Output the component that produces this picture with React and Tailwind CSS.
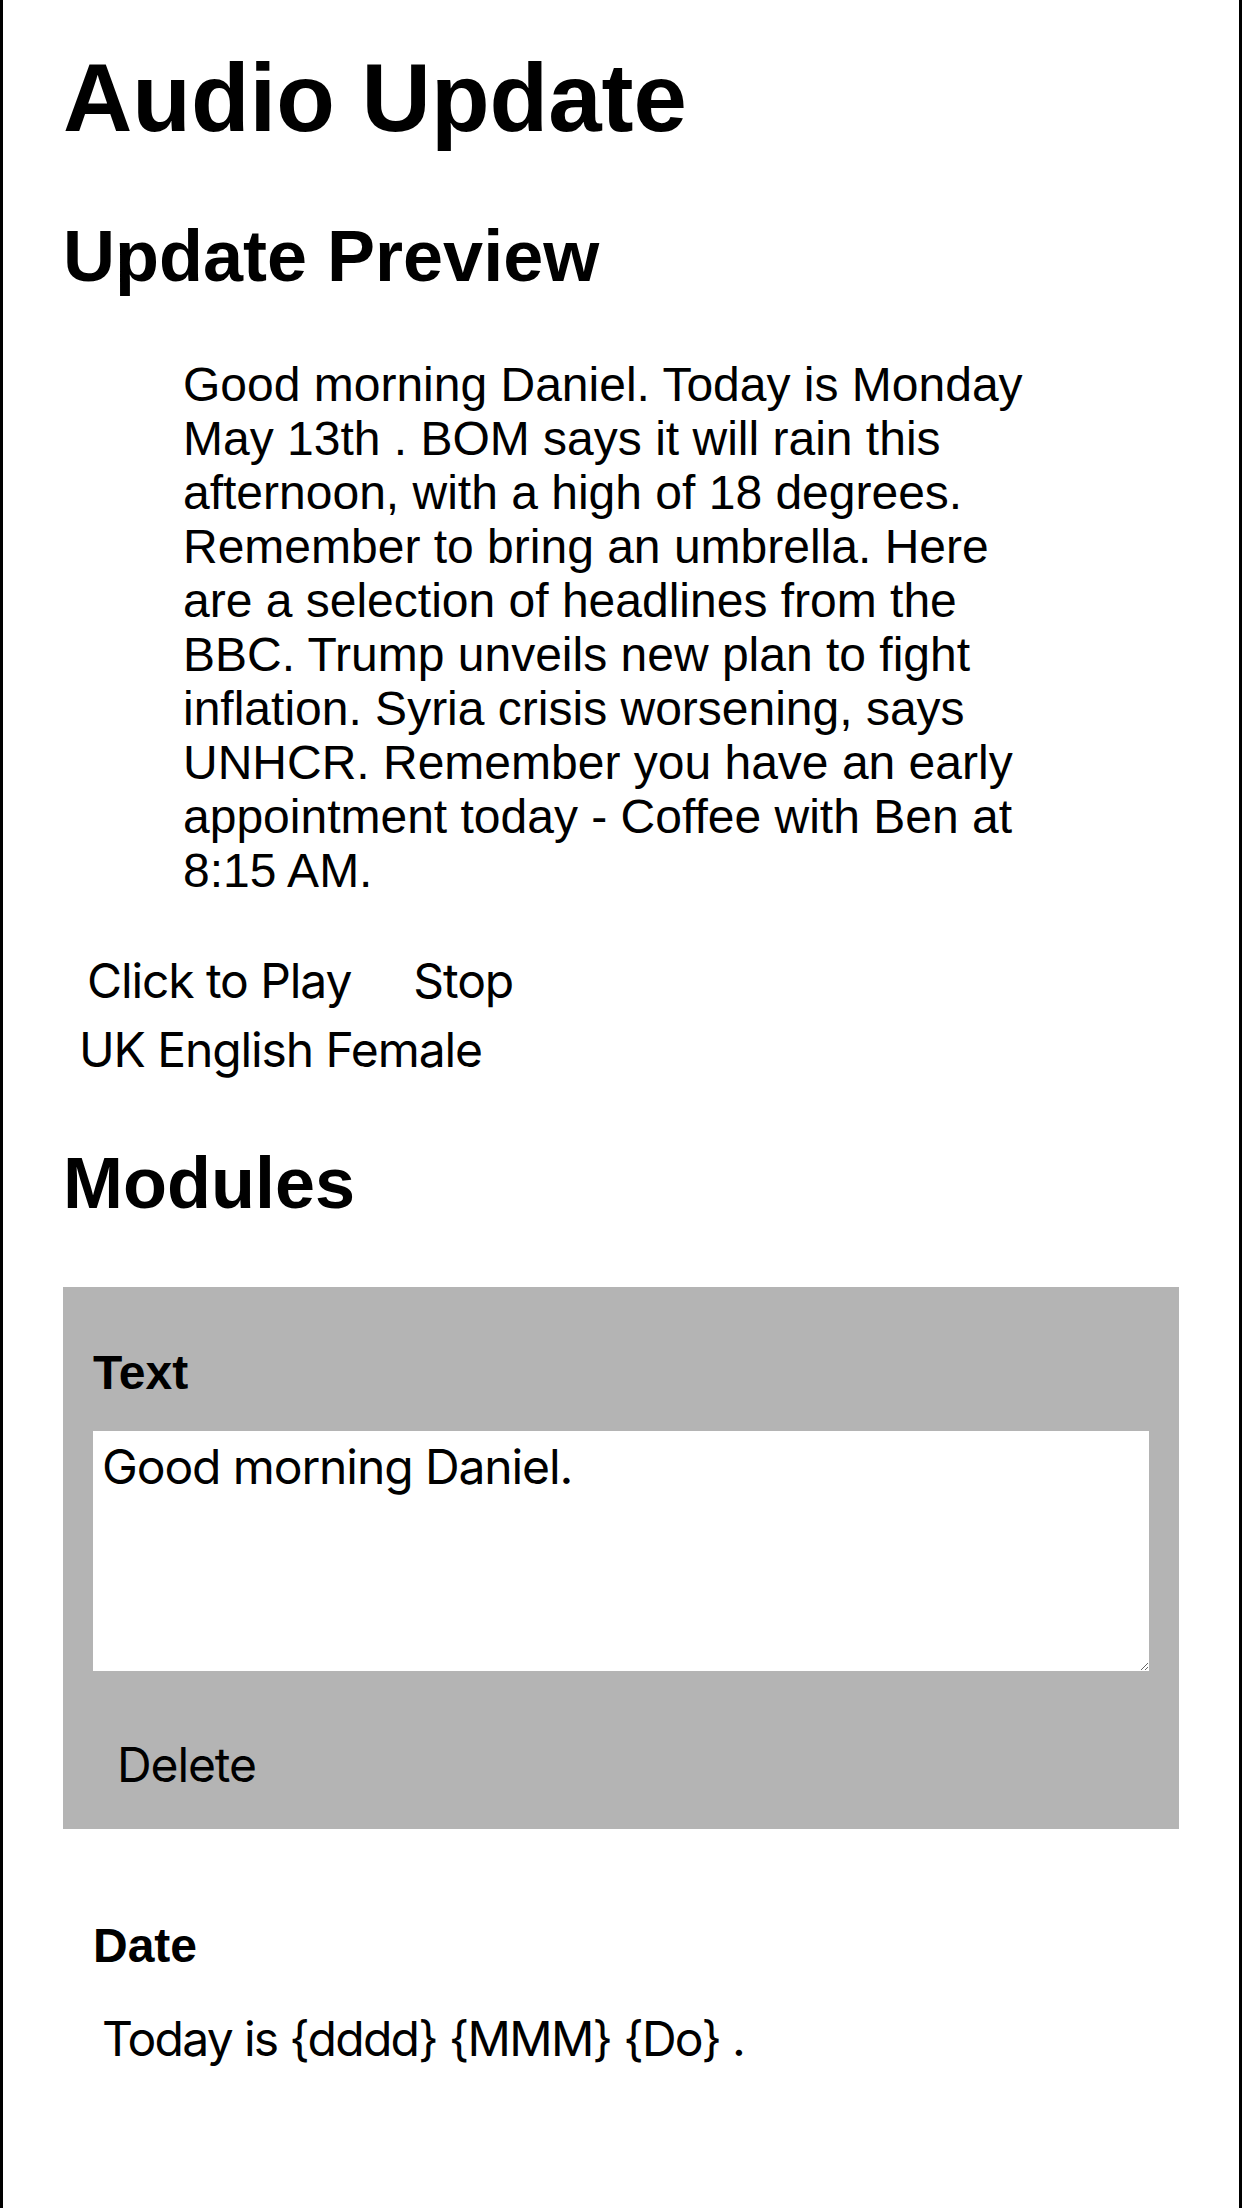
const PREVIEW_TEXT =
  "Good morning Daniel. Today is Monday May 13th . BOM says it will rain this afternoon, with a high of 18 degrees. Remember to bring an umbrella. Here are a selection of headlines from the BBC. Trump unveils new plan to fight inflation. Syria crisis worsening, says UNHCR. Remember you have an early appointment today - Coffee with Ben at 8:15 AM.";

const heading = "font-['Liberation_Sans',Arial,sans-serif] font-bold text-black";
const ui = "font-['Inter','Noto_Sans',sans-serif] tracking-[-1.1px] text-black";

function TextModule() {
  return (
    <div className="mt-[62px] bg-[#b4b4b4] px-[30px] pt-[58px] pb-[35px]">
      <h4 className={`${heading} text-[48px] leading-[55px]`}>Text</h4>
      <textarea
        defaultValue="Good morning Daniel."
        className={`${ui} mt-[31px] block h-[240px] w-full bg-white px-[9px] pt-[7px] text-[48px] leading-[58px] outline-none`}
      />
      <button className={`${ui} mt-[65px] ml-[24px] block text-[48px] leading-[58px]`}>
        Delete
      </button>
    </div>
  );
}

function DateModule() {
  return (
    <div className="mt-[31px] px-[30px] pt-[58px]">
      <h4 className={`${heading} text-[48px] leading-[55px]`}>Date</h4>
      <input
        defaultValue="Today is {dddd} {MMM} {Do} ."
        className={`${ui} mt-[37px] block w-full bg-white px-[9px] text-[48px] leading-[58px] tracking-[-1.7px] outline-none`}
      />
    </div>
  );
}

export default function App() {
  return (
    <div className="min-h-[2208px] border-x-[3px] border-black bg-white px-[60px] pt-[43px]">
      <h1 className={`${heading} text-[96px] leading-[110px]`}>Audio Update</h1>

      <h2 className={`${heading} mt-[62px] text-[72px] leading-[83px]`}>Update Preview</h2>
      <blockquote className="mx-[120px] mt-[60px] font-['Liberation_Sans',Arial,sans-serif] text-[48px] leading-[54px] text-black">
        {PREVIEW_TEXT}
      </blockquote>

      {/* playback controls */}
      <div className="mt-[54px] flex">
        <button className={`${ui} ml-[24px] text-[48px] leading-[58px]`}>Click to Play</button>
        <button className={`${ui} ml-[62px] text-[48px] leading-[58px]`}>Stop</button>
      </div>
      <select
        defaultValue="uk-female"
        className={`${ui} mt-[11px] ml-[16px] block appearance-none bg-transparent text-[48px] leading-[58px] outline-none`}
      >
        <option value="uk-female">UK English Female</option>
        <option value="uk-male">UK English Male</option>
        <option value="us-female">US English Female</option>
      </select>

      <h2 className={`${heading} mt-[63px] text-[72px] leading-[83px]`}>Modules</h2>
      <TextModule />
      <DateModule />
    </div>
  );
}
